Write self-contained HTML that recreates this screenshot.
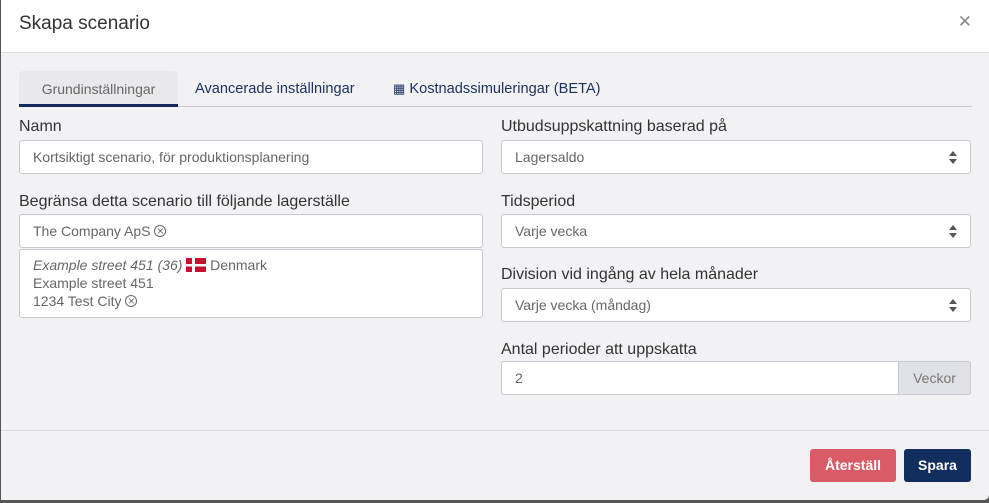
<!DOCTYPE html><html><head><style>
*{box-sizing:border-box}
body{margin:0;width:989px;height:503px;overflow:hidden;background:#555;font-family:"Liberation Sans",sans-serif}
.m{position:absolute;left:1px;top:0;width:988px;height:500px;background:#f2f2f5;border-radius:0 0 5px 0;overflow:hidden}
.hd{position:absolute;left:0;top:0;width:100%;height:53px;background:#fff;border-bottom:1px solid #dcdce0}
.hd h1{margin:0;position:absolute;left:18px;top:13px;font-size:19px;font-weight:normal;color:#333}
.x{position:absolute;right:17px;top:12px;color:#888;font-size:17px}
.tabs{position:absolute;left:18px;top:71px;width:953px;height:36px;border-bottom:1px solid #c9cad3}
.tab{position:absolute;top:0;height:36px;line-height:36px;font-size:14.6px;color:#1d3260}
.t1{left:0;width:159px;background:#e9e9ec;color:#666;text-align:center;border-bottom:3px solid #142a5c;border-radius:4px 4px 0 0;font-size:14px}
label{position:absolute;font-size:16px;color:#333}
.in{position:absolute;background:#fff;border:1px solid #c8c9d0;border-radius:3px;height:34px;line-height:32px;padding-left:13px;font-size:14px;color:#666}
.sel:after{content:"";position:absolute;right:13px;top:10px;border:4px solid transparent;border-bottom:5px solid #555;border-top:none}
.sel:before{content:"";position:absolute;right:13px;top:18px;border:4px solid transparent;border-top:5px solid #555;border-bottom:none}
.c{font-size:12px;display:inline-block;border:1px solid #666;border-radius:50%;width:12px;height:12px;line-height:10px;text-align:center;vertical-align:1px}
.btn{position:absolute;top:449px;height:33px;line-height:33px;color:#fff;font-size:14px;font-weight:bold;text-align:center;border-radius:3px}
</style></head><body><div class="m">
<div class="hd"><h1>Skapa scenario</h1><span class="x">✕</span></div>
<div class="tabs"><div class="tab t1">Grundinställningar</div><div class="tab" style="left:176px">Avancerade inställningar</div><div class="tab" style="left:374px"><span style="font-size:13px">▦</span> Kostnadssimuleringar (BETA)</div></div>
<label style="left:18px;top:118px">Namn</label>
<div class="in" style="left:18px;top:140px;width:464px">Kortsiktigt scenario, för produktionsplanering</div>
<label style="left:18px;top:193px">Begränsa detta scenario till följande lagerställe</label>
<div class="in" style="left:18px;top:214px;width:464px">The Company ApS <span class="c">×</span></div>
<div class="in" style="left:18px;top:249px;width:464px;height:69px;line-height:18px;padding-top:6px">
<i>Example street 451 (36)</i> <svg width="20" height="14" style="vertical-align:-2px"><rect width="20" height="14" fill="#c8102e"/><rect x="6" width="3" height="14" fill="#fff"/><rect y="6" width="20" height="2.5" fill="#fff"/></svg> Denmark<br>Example street 451<br>1234 Test City <span class="c">×</span></div>
<label style="left:500px;top:118px">Utbudsuppskattning baserad på</label>
<div class="in sel" style="left:500px;top:140px;width:470px">Lagersaldo</div>
<label style="left:500px;top:193px">Tidsperiod</label>
<div class="in sel" style="left:500px;top:214px;width:470px">Varje vecka</div>
<label style="left:500px;top:266px">Division vid ingång av hela månader</label>
<div class="in sel" style="left:500px;top:288px;width:470px">Varje vecka (måndag)</div>
<label style="left:500px;top:341px">Antal perioder att uppskatta</label>
<div class="in" style="left:500px;top:361px;width:470px">2</div>
<div class="in" style="left:897px;top:361px;width:73px;background:#e0e1e6;color:#777;padding:0;text-align:center;border-radius:0 3px 3px 0">Veckor</div>
<div style="position:absolute;left:0;top:430px;width:100%;border-top:1px solid #dcdce0"></div>
<div class="btn" style="left:809px;width:86px;background:#d95b68">Återställ</div>
<div class="btn" style="left:903px;width:67px;background:#122e5f">Spara</div>
</div></body></html>
